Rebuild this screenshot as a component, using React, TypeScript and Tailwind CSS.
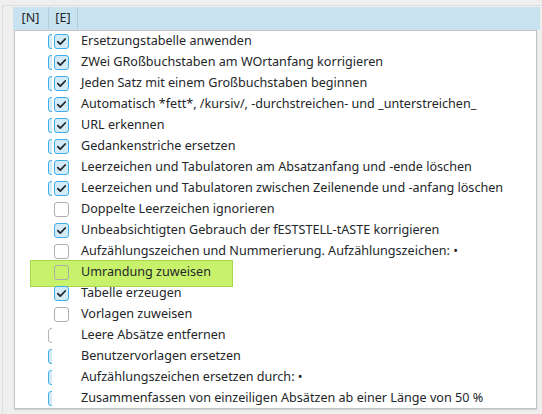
type NState = "blue" | "gray" | null;
type EState = "checked" | "unchecked" | null;

interface Row {
  n: NState;
  e: EState;
  label: string;
}

const ROWS: Row[] = [
  { n: "blue", e: "checked", label: "Ersetzungstabelle anwenden" },
  { n: "blue", e: "checked", label: "ZWei GRoßbuchstaben am WOrtanfang korrigieren" },
  { n: "blue", e: "checked", label: "Jeden Satz mit einem Großbuchstaben beginnen" },
  { n: "blue", e: "checked", label: "Automatisch *fett*, /kursiv/, -durchstreichen- und _unterstreichen_" },
  { n: "blue", e: "checked", label: "URL erkennen" },
  { n: "blue", e: "checked", label: "Gedankenstriche ersetzen" },
  { n: "blue", e: "checked", label: "Leerzeichen und Tabulatoren am Absatzanfang und -ende löschen" },
  { n: "blue", e: "checked", label: "Leerzeichen und Tabulatoren zwischen Zeilenende und -anfang löschen" },
  { n: null, e: "unchecked", label: "Doppelte Leerzeichen ignorieren" },
  { n: null, e: "checked", label: "Unbeabsichtigten Gebrauch der fESTSTELL-tASTE korrigieren" },
  { n: null, e: "unchecked", label: "Aufzählungszeichen und Nummerierung. Aufzählungszeichen: •" },
  { n: null, e: "unchecked", label: "Umrandung zuweisen" },
  { n: null, e: "checked", label: "Tabelle erzeugen" },
  { n: null, e: "unchecked", label: "Vorlagen zuweisen" },
  { n: "gray", e: null, label: "Leere Absätze entfernen" },
  { n: "blue", e: null, label: "Benutzervorlagen ersetzen" },
  { n: "blue", e: null, label: "Aufzählungszeichen ersetzen durch: •" },
  { n: "blue", e: null, label: "Zusammenfassen von einzeiligen Absätzen ab einer Länge von 50 %" },
];

function Checkbox({ checked }: { checked: boolean }) {
  if (checked) {
    return (
      <div className="w-[15px] h-[15px] rounded-[3px] border border-[#3daee9] bg-[#d3eaf7] flex items-center justify-center">
        <svg width="11" height="11" viewBox="0 0 11 11">
          <path d="M1.8 5.6 L4.3 8.1 L9.2 3" fill="none" stroke="#232629" strokeWidth="1.8" strokeLinecap="round" strokeLinejoin="round" />
        </svg>
      </div>
    );
  }
  return <div className="w-[15px] h-[15px] rounded-[3px] border border-[#a3a7ab]/90" />;
}

function PartialBox({ state }: { state: NState }) {
  return (
    <div className="w-[4px] h-[15px] overflow-hidden">
      {state === "blue" && (
        <div className="w-[15px] h-[15px] rounded-[3px] border border-[#3daee9] bg-[#d3eaf7]" />
      )}
      {state === "gray" && (
        <div className="w-[15px] h-[15px] rounded-[3px] border border-[#b4b7ba] bg-white" />
      )}
    </div>
  );
}

export default function App() {
  return (
    <div
      className="w-[542px] h-[414px] bg-[#efefef] overflow-hidden text-[12.6px] text-[#232629]"
      style={{ fontFamily: '"Noto Sans", "DejaVu Sans", sans-serif' }}
    >
      <div className="ml-[2px] mt-[5px] h-[409px] border-l border-t border-[#dedede] pl-[10px] pt-[1px]">
        <div className="flex h-[23px] w-[527px] bg-[#c9e2ef] border-b border-[#c9e2ef]">
          <div className="w-[36px] flex items-center justify-center border-r border-[#b3cbd8]">[N]</div>
          <div className="w-[29px] flex items-center justify-center border-r border-[#b3cbd8]">[E]</div>
        </div>
        <div className="relative ml-[1px] w-[523px] h-[379px] bg-white border border-[#c2c2c2] shadow-[0_1px_1px_rgba(0,0,0,0.12)]">
          <div className="absolute left-[15px] top-[229px] w-[203px] h-[27px] bg-[#c8f26c] border border-[#a6d84c]" />
          {ROWS.map((row) => (
            <div key={row.label} className="relative flex items-center h-[21px] pl-[33px] whitespace-nowrap">
              <PartialBox state={row.n} />
              <div className="ml-[2px] w-[15px]">
                {row.e !== null && <Checkbox checked={row.e === "checked"} />}
              </div>
              <span className="ml-[12px] leading-none">{row.label}</span>
            </div>
          ))}
        </div>
      </div>
    </div>
  );
}
